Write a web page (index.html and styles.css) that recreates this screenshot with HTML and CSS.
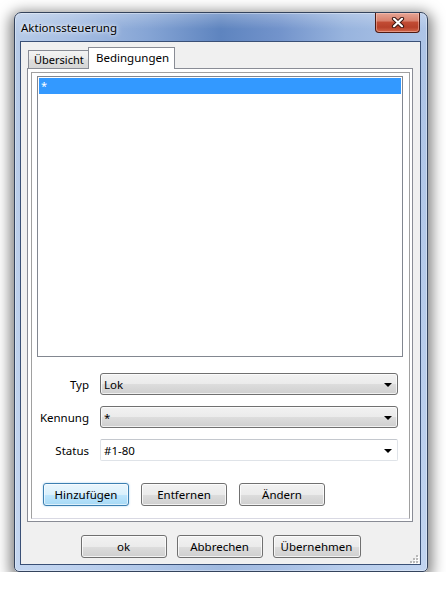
FILE: index.html
```html
<!DOCTYPE html>
<html lang="de">
<head>
<meta charset="utf-8">
<title>Aktionssteuerung</title>
<link rel="stylesheet" href="styles.css">
</head>
<body>
<div class="window">
  <div class="titlebar">
    <span class="title">Aktionssteuerung</span>
    <button class="close" aria-label="Schließen">
      <svg width="14" height="11" viewBox="0 0 14 11">
        <path d="M3 1.8 L11 9.2 M11 1.8 L3 9.2" stroke="#3b1712" stroke-width="4.2" stroke-linecap="round" fill="none"/>
        <path d="M3 1.8 L11 9.2 M11 1.8 L3 9.2" stroke="#ffffff" stroke-width="2.2" stroke-linecap="round" fill="none"/>
      </svg>
    </button>
  </div>
  <div class="client">
    <div class="tabs">
      <div class="tab">Übersicht</div>
      <div class="tab active">Bedingungen</div>
    </div>
    <div class="panel">
      <div class="frame">
        <div class="list">
          <div class="row selected">*</div>
        </div>
        <div class="form">
          <label class="label">Typ</label>
          <div class="combo"><span>Lok</span><i class="arrow"></i></div>
          <label class="label">Kennung</label>
          <div class="combo"><span>*</span><i class="arrow"></i></div>
          <label class="label">Status</label>
          <div class="combo editable"><span>#1-80</span><i class="arrow"></i></div>
        </div>
        <div class="actions">
          <button class="btn default">Hinzufügen</button>
          <button class="btn">Entfernen</button>
          <button class="btn">Ändern</button>
        </div>
      </div>
    </div>
    <div class="dialog-buttons">
      <button class="btn">ok</button>
      <button class="btn">Abbrechen</button>
      <button class="btn wide">Übernehmen</button>
    </div>
    <svg class="grip" width="9" height="9" viewBox="0 0 9 9">
      <g fill="#ffffff">
        <rect x="7" y="1" width="2" height="2"/>
        <rect x="4" y="4" width="2" height="2"/><rect x="7" y="4" width="2" height="2"/>
        <rect x="1" y="7" width="2" height="2"/><rect x="4" y="7" width="2" height="2"/><rect x="7" y="7" width="2" height="2"/>
      </g>
      <g fill="#b8b8b8">
        <rect x="6" y="0" width="2" height="2"/>
        <rect x="3" y="3" width="2" height="2"/><rect x="6" y="3" width="2" height="2"/>
        <rect x="0" y="6" width="2" height="2"/><rect x="3" y="6" width="2" height="2"/><rect x="6" y="6" width="2" height="2"/>
      </g>
    </svg>
  </div>
</div>
</body>
</html>
```
FILE: styles.css
```css
* { box-sizing: border-box; }

html, body {
  margin: 0;
  background: #ffffff;
}

body {
  padding: 12px 0 0 14px;
  font-family: "Noto Sans", "Open Sans", sans-serif;
  font-size: 11px;
  color: #000;
}

.window {
  width: 414px;
  height: 560px;
  border: 1px solid #34435c;
  border-radius: 7px 7px 5px 5px;
  padding: 0 6px 6px 5px;
  display: flex;
  flex-direction: column;
  background:
    linear-gradient(to bottom, rgba(255,255,255,0.25) 0, rgba(255,255,255,0) 16px),
    linear-gradient(to bottom, rgba(205,222,246,0) 60px, rgba(205,222,246,0.6) 100%),
    linear-gradient(to right, #b7cbe8 0%, #a6bee3 14%, #86a5d5 32%, #5e84bf 50%, #7293cb 64%, #98b4de 80%, #afc5e7 100%);
  box-shadow: 0 4px 14px 4px rgba(0,0,0,0.5), inset 0 0 0 1px rgba(255,255,255,0.35);
}

.titlebar {
  height: 28px;
  display: flex;
  align-items: flex-start;
  justify-content: space-between;
}

.title {
  margin: 7px 0 0 1px;
  font-size: 11.5px;
  line-height: 15px;
  text-shadow: 0 0 6px rgba(255,255,255,0.95), 0 0 3px rgba(255,255,255,0.8);
}

.close {
  width: 45px;
  height: 20px;
  margin: 0 1px 0 0;
  padding: 0;
  border: 1px solid #4e1a12;
  border-top: none;
  border-radius: 0 0 4px 4px;
  background: linear-gradient(to bottom, #e6a595 0%, #d9826e 40%, #c14b33 50%, #b7412a 75%, #d2664a 100%);
  box-shadow: inset 0 0 0 1px rgba(255,210,200,0.45);
  display: flex;
  align-items: center;
  justify-content: center;
}

.client {
  position: relative;
  height: 524px;
  border: 1px solid #3a5076;
  background: #f0f0f0;
  padding: 5px 7px 0 6px;
  display: flex;
  flex-direction: column;
}

.tabs {
  height: 21px;
  display: flex;
  align-items: flex-end;
  padding-left: 1px;
}

.tab {
  height: 18px;
  width: 61px;
  border: 1px solid #898c95;
  border-bottom: none;
  background: linear-gradient(to bottom, #f3f3f3 0%, #ebebeb 45%, #dddddd 55%, #d6d6d6 100%);
  font-size: 11px;
  line-height: 17px;
  padding-left: 5px;
  white-space: nowrap;
}

.tab.active {
  position: relative;
  z-index: 1;
  width: 87px;
  height: 22px;
  margin: 0 0 -1px -1px;
  background: #ffffff;
  padding-left: 7px;
  line-height: 19px;
  font-size: 11.5px;
}

.panel {
  height: 454px;
  border: 1px solid #898c95;
  background: #ffffff;
  padding: 3px 2px 2px 3px;
  display: flex;
}

.frame {
  flex: 1;
  border: 1px solid #a0a0a0;
  border-bottom-color: #d9d9e3;
  padding: 3px 6px 0 5px;
  display: flex;
  flex-direction: column;
}

.list {
  height: 281px;
  border: 1px solid #828790;
  padding: 1px;
  background: #fff;
}

.row {
  height: 16px;
  line-height: 16px;
  padding-left: 2px;
  font-size: 11px;
}

.row.selected {
  background: #3399ff;
  color: #ffffff;
}

.form {
  margin: 16px 5px 0 0;
  display: grid;
  grid-template-columns: 52px 1fr;
  column-gap: 11px;
  row-gap: 11px;
  grid-auto-rows: 22px;
}

.label {
  display: flex;
  align-items: center;
  justify-content: flex-end;
  font-size: 11.5px;
}

.combo {
  display: flex;
  align-items: center;
  justify-content: space-between;
  border: 1px solid #707070;
  border-radius: 3px;
  background: linear-gradient(to bottom, #f2f2f2 0%, #ebebeb 50%, #dddddd 51%, #cfcfcf 100%);
  box-shadow: inset 0 0 0 1px rgba(255,255,255,0.7);
  padding: 0 5px 0 3px;
  font-size: 11.5px;
}

.combo.editable {
  background: #ffffff;
  border-color: #dfe3e8;
  border-top-color: #c4c8ce;
  border-radius: 2px;
  box-shadow: none;
}

.arrow {
  width: 0;
  height: 0;
  border-left: 4px solid transparent;
  border-right: 4px solid transparent;
  border-top: 4px solid #000;
  margin-top: 1px;
}

.actions {
  margin: 22px 0 0 6px;
  display: flex;
  gap: 12px;
}

.btn {
  width: 86px;
  height: 23px;
  padding: 0;
  border: 1px solid #707070;
  border-radius: 3px;
  background: linear-gradient(to bottom, #f2f2f2 0%, #ebebeb 50%, #dddddd 51%, #cfcfcf 100%);
  box-shadow: inset 0 0 0 1px rgba(255,255,255,0.75);
  font-family: "Noto Sans", "Open Sans", sans-serif;
  font-size: 11.5px;
  color: #000;
  line-height: 20px;
}

.btn.default {
  border-color: #3c7fb1;
  background: linear-gradient(to bottom, #eaf6fd 0%, #d9f0fc 50%, #bee6fd 51%, #a7d9f5 100%);
  box-shadow: inset 0 0 0 1px rgba(255,255,255,0.6), 0 0 2px rgba(60,160,230,0.5);
}

.btn.wide {
  width: 88px;
}

.dialog-buttons {
  margin-top: 13px;
  display: flex;
  justify-content: center;
  gap: 10px;
  padding-left: 1px;
}

.grip {
  position: absolute;
  right: 1px;
  bottom: 0px;
}
```
